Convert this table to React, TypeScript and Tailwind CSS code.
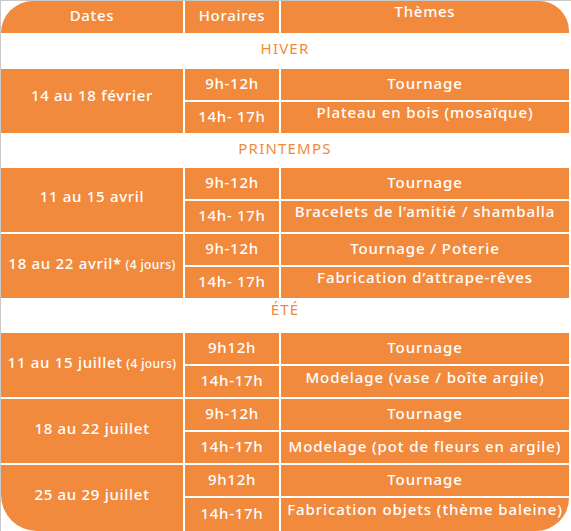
import React from "react";

type Sub = { h: string; t: string; tc?: string };
type Block = { date: React.ReactNode; subs: Sub[]; last?: boolean; dc?: string };
type Section = { name: string; h: string; pc: string; blocks: Block[] };

const J = () => <span className="text-[12px] tracking-[0.4px]"> (4 jours)</span>;

const sections: Section[] = [
  {
    name: "HIVER",
    h: "h-[36px]",
    pc: "pb-[6px]",
    blocks: [
      {
        date: "14 au 18 février",
        dc: "pb-[11px]",
        subs: [
          { h: "9h-12h", t: "Tournage" },
          { h: "14h- 17h", t: "Plateau en bois (mosaïque)", tc: "pb-[10px]" },
        ],
      },
    ],
  },
  {
    name: "PRINTEMPS",
    h: "h-[35px]",
    pc: "pb-[4px]",
    blocks: [
      {
        date: "11 au 15 avril",
        dc: "pb-[7px]",
        subs: [
          { h: "9h-12h", t: "Tournage" },
          { h: "14h- 17h", t: "Bracelets de l’amitié / shamballa", tc: "pb-[10px]" },
        ],
      },
      {
        date: (
          <>
            18 au 22 avril*<J />
          </>
        ),
        dc: "pb-[5px]",
        subs: [
          { h: "9h-12h", t: "Tournage / Poterie" },
          { h: "14h- 17h", t: "Fabrication d’attrape-rêves", tc: "pb-[10px]" },
        ],
      },
    ],
  },
  {
    name: "ÉTÉ",
    h: "h-[35px]",
    pc: "pb-[12px]",
    blocks: [
      {
        date: (
          <>
            11 au 15 juillet<J />
          </>
        ),
        dc: "pb-[6px]",
        subs: [
          { h: "9h12h", t: "Tournage" },
          { h: "14h-17h", t: "Modelage (vase / boîte argile)", tc: "pb-[9px]" },
        ],
      },
      {
        date: "18 au 22 juillet",
        dc: "pb-[5px]",
        subs: [
          { h: "9h-12h", t: "Tournage" },
          { h: "14h-17h", t: "Modelage (pot de fleurs en argile)" },
        ],
      },
      {
        date: "25 au 29 juillet",
        dc: "pb-[8px]",
        last: true,
        subs: [
          { h: "9h12h", t: "Tournage" },
          { h: "14h-17h", t: "Fabrication objets (thème baleine)", tc: "pb-[11px]" },
        ],
      },
    ],
  },
];

export default function App() {
  return (
    <div className="w-[571px] h-[531px] bg-white overflow-hidden border-t border-l border-[#c9c9c9] box-border">
      <div
        className="w-[568px] flex flex-col gap-[2px] text-white text-[15px] font-medium tracking-[0.7px]"
        style={{ fontFamily: '"Noto Sans", "Open Sans", sans-serif' }}
      >
        {/* header */}
        <div className="grid grid-cols-[182px_94px_1fr] gap-[2px] h-[32px]">
          <div className="bg-[#f28a3e] rounded-tl-[34px] flex items-center justify-center pb-[3px]">Dates</div>
          <div className="bg-[#f28a3e] flex items-center justify-center pb-[3px]">Horaires</div>
          <div className="bg-[#f28a3e] rounded-tr-[30px] flex items-start justify-center pt-[3px] leading-none">Thèmes</div>
        </div>
        {sections.map((s) => (
          <React.Fragment key={s.name}>
            <div
              className={`${s.h} ${s.pc} -my-[2px] flex items-center justify-center text-[#f08a3c] font-normal text-[15px] tracking-[1.2px]`}
            >
              {s.name}
            </div>
            {s.blocks.map((b, i) => (
              <div
                key={i}
                className={`grid grid-cols-[182px_94px_1fr] gap-[2px] ${b.last ? "grid-rows-[31px_33px]" : "grid-rows-[31px_31px]"}`}
              >
                <div
                  className={`row-span-2 bg-[#f28a3e] flex items-center justify-center whitespace-nowrap ${b.dc ?? ""} ${b.last ? "rounded-bl-[36px]" : ""}`}
                >
                  <span>{b.date}</span>
                </div>
                {b.subs.map((sub, k) => (
                  <React.Fragment key={k}>
                    <div
                      className="bg-[#f28a3e] flex items-center justify-center pb-[2px]"
                      style={{ gridColumn: 2, gridRow: k + 1 }}
                    >
                      {sub.h}
                    </div>
                    <div
                      className={`bg-[#f28a3e] flex items-center justify-center whitespace-nowrap tracking-[0.9px] ${sub.tc ?? "pb-[3px]"} ${b.last && k === 1 ? "rounded-br-[34px]" : ""}`}
                      style={{ gridColumn: 3, gridRow: k + 1 }}
                    >
                      {sub.t}
                    </div>
                  </React.Fragment>
                ))}
              </div>
            ))}
          </React.Fragment>
        ))}
      </div>
    </div>
  );
}
